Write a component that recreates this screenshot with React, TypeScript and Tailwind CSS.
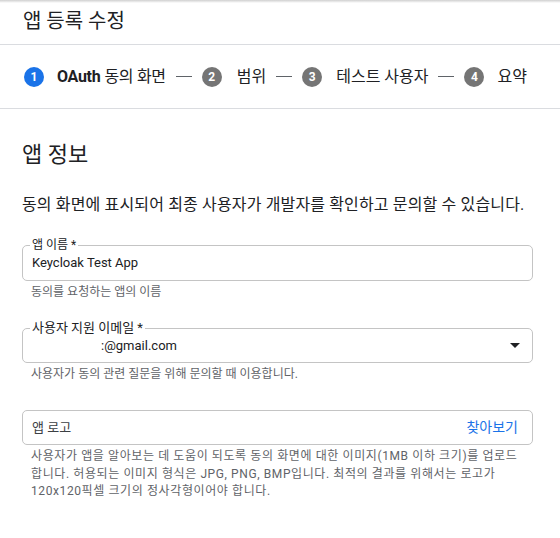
import React from "react";

const font = { fontFamily: "Roboto, 'Noto Sans CJK KR', sans-serif" };

function StepCircle({ n, active }: { n: number; active?: boolean }) {
  return (
    <div
      className={
        "flex h-[20px] w-[20px] shrink-0 items-center justify-center rounded-full text-[12px] font-bold text-white " +
        (active ? "bg-[#1a73e8]" : "bg-[#757575]")
      }
    >
      {n}
    </div>
  );
}

function Dash() {
  return <div className="mx-[10px] h-px w-[16px] bg-[#5f6368]" />;
}

export default function App() {
  return (
    <div className="h-[538px] w-[560px] overflow-hidden bg-white text-[#202124]" style={font}>
      <div className="h-[3px] bg-gradient-to-b from-[#d0d0d0] to-white" />
      <div className="h-[42px] border-b border-[#dadce0] pl-[23px]">
        <div className="pt-[4px] text-[20px] leading-[28px]">앱 등록 수정</div>
      </div>
      <div className="flex h-[64px] items-center border-b border-[#dadce0] pl-[24px] text-[16px]">
        <StepCircle n={1} active />
        <span className="ml-[13px] font-bold tracking-[-0.3px]">OAuth</span>
        <span className="ml-[4px] tracking-[-0.3px]">동의 화면</span>
        <Dash />
        <StepCircle n={2} />
        <span className="ml-[15px]">범위</span>
        <Dash />
        <StepCircle n={3} />
        <span className="ml-[14px]">테스트 사용자</span>
        <Dash />
        <StepCircle n={4} />
        <span className="ml-[13px]">요약</span>
      </div>

      <div className="pl-[22px] pr-[27px]">
        <div className="mt-[31px] text-[22px] leading-[30px]">앱 정보</div>
        <div className="mt-[25px] text-[16px] leading-[20px] tracking-[0.15px]">
          동의 화면에 표시되어 최종 사용자가 개발자를 확인하고 문의할 수 있습니다.
        </div>

        <div className="relative mt-[30px] flex h-[36px] items-center rounded-[5px] border border-[#c4c4c4] px-[9px] text-[13px]">
          <span className="absolute left-[7px] top-[-9px] bg-white px-[2px] text-[12px] leading-[16px]">
            앱 이름 *
          </span>
          <span>Keycloak Test App</span>
        </div>
        <div className="mt-[3px] px-[9px] text-[12px] leading-[16px] text-[#5f6368]">
          동의를 요청하는 앱의 이름
        </div>

        <div className="relative mt-[28px] flex h-[35px] items-center rounded-[5px] border border-[#c4c4c4] pl-[78px] pr-[12px] text-[13px]">
          <span className="absolute left-[7px] top-[-10px] bg-white px-[2px] text-[13px] leading-[18px]">
            사용자 지원 이메일 *
          </span>
          <span className="flex-1">:@gmail.com</span>
          <svg width="10" height="5" viewBox="0 0 10 5">
            <path d="M0 0 L10 0 L5 5 Z" fill="#202124" />
          </svg>
        </div>
        <div className="mt-[3px] px-[9px] text-[12px] leading-[16px] text-[#5f6368]">
          사용자가 동의 관련 질문을 위해 문의할 때 이용합니다.
        </div>

        <div className="mt-[28px] flex h-[35px] items-center justify-between rounded-[5px] border border-[#c4c4c4] px-[9px] text-[14px]">
          <span className="text-[13px] text-[#3c4043]">앱 로고</span>
          <span className="mr-[5px] text-[#1a73e8]">찾아보기</span>
        </div>
        <div className="mt-[3px] px-[9px] text-[12px] leading-[17.5px] tracking-[0.6px] text-[#5f6368]">
          사용자가 앱을 알아보는 데 도움이 되도록 동의 화면에 대한 이미지(1MB 이하 크기)를 업로드합니다. 허용되는 이미지 형식은 JPG, PNG, BMP입니다. 최적의 결과를 위해서는 로고가 120x120픽셀 크기의 정사각형이어야 합니다.
        </div>
      </div>
    </div>
  );
}
